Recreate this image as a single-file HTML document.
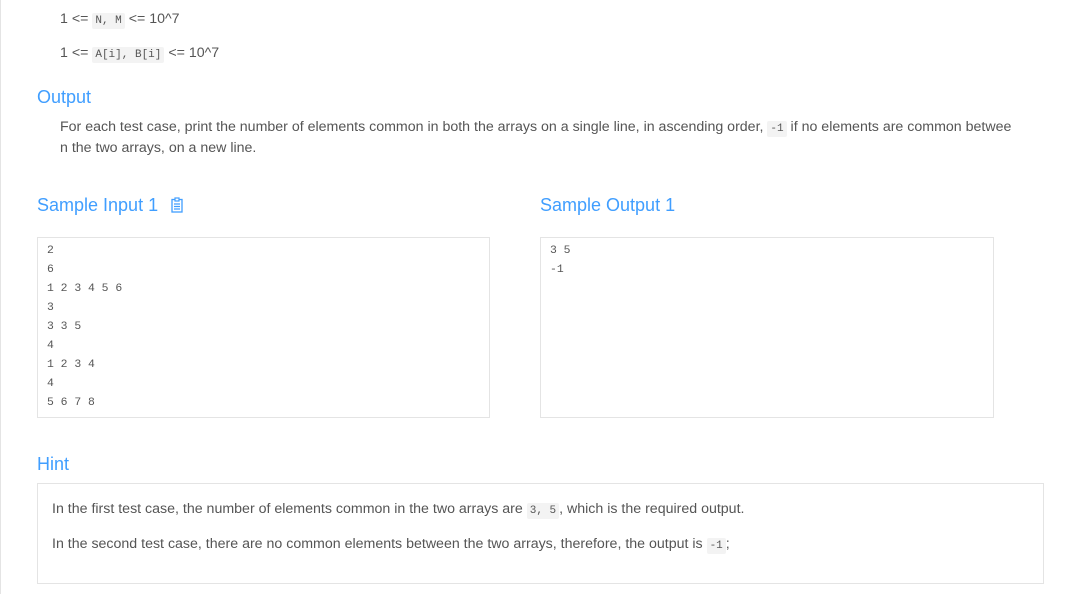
<!DOCTYPE html><html><head><style>
body{margin:0;width:1079px;height:594px;background:#fff;font-family:"Liberation Sans",sans-serif;color:#555;position:relative;overflow:hidden}
.lb{position:absolute;left:0;top:0;width:1px;height:594px;background:#e4e4e4}
.a{position:absolute;white-space:nowrap}
code{font-family:"Liberation Mono",monospace;font-size:11px;background:#f3f3f3;padding:2px 3px;border-radius:2px;color:#555}
.t{font-size:14.2px}
h{position:absolute;font-size:18px;color:#409eff}
.box{position:absolute;border:1px solid #e4e4e4;box-sizing:border-box}
pre{margin:0;position:absolute;font-family:"Liberation Mono",monospace;font-size:11.4px;line-height:19px;color:#555}
</style></head><body>
<div class="lb"></div>
<div class="a t" style="left:60px;top:11px">1 &lt;= <code>N, M</code> &lt;= 10^7</div>
<div class="a t" style="left:60px;top:45px">1 &lt;= <code>A[i], B[i]</code> &lt;= 10^7</div>
<h style="left:37px;top:87px">Output</h>
<div class="a t" style="left:60px;top:119px">For each test case, print the number of elements common in both the arrays on a single line, in ascending order, <code>-1</code> if no elements are common betwee</div>
<div class="a t" style="left:60px;top:140px">n the two arrays, on a new line.</div>
<h style="left:37px;top:195px">Sample Input 1
<svg style="margin-left:8px;vertical-align:-2px" width="12" height="16" viewBox="0 0 12 16"><rect x="1" y="2.5" width="10" height="12.5" fill="none" stroke="#409eff" stroke-width="1.3"/><rect x="4" y="1" width="4" height="3" fill="#fff" stroke="#409eff" stroke-width="1.2"/><path d="M3 7h6M3 9.5h6M3 12h6" stroke="#409eff" stroke-width="1.2"/></svg></h>
<h style="left:540px;top:195px">Sample Output 1</h>
<div class="box" style="left:37px;top:237px;width:453px;height:181px"></div>
<pre style="left:47px;top:242px">2
6
1 2 3 4 5 6
3
3 3 5
4
1 2 3 4
4
5 6 7 8</pre>
<div class="box" style="left:540px;top:237px;width:454px;height:181px"></div>
<pre style="left:550px;top:242px">3 5
-1</pre>
<h style="left:37px;top:454px">Hint</h>
<div class="box" style="left:37px;top:483px;width:1007px;height:101px"></div>
<div class="a t" style="left:52px;top:501px">In the first test case, the number of elements common in the two arrays are <code>3, 5</code>, which is the required output.</div>
<div class="a t" style="left:52px;top:536px">In the second test case, there are no common elements between the two arrays, therefore, the output is <code>-1</code>;</div>
</body></html>
